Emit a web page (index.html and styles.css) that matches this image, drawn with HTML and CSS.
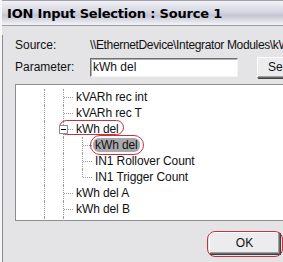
FILE: index.html
```html
<!DOCTYPE html>
<html lang="en">
<head>
  <meta charset="UTF-8" />
  <title>ION Input Selection</title>
  <link rel="stylesheet" href="styles.css">
</head>
<body>

  <div class="window">
    <div class="titlebar">ION Input Selection : Source 1</div>

    <div class="client">
      <div class="field">
        <span class="label">Source:</span>
        <span class="value">\\EthernetDevice\Integrator Modules\kWh del</span>
      </div>

      <div class="field param">
        <span class="label">Parameter:</span>
        <div class="input">kWh del</div>
        <button class="btn select">Select</button>
      </div>

      <div class="tree">
        <div class="row">
          <span class="guide"></span>
          <span class="branch"></span>
          <span class="text">kVARh rec int</span>
        </div>
        <div class="row">
          <span class="guide"></span>
          <span class="branch"></span>
          <span class="text">kVARh rec T</span>
        </div>
        <div class="row">
          <span class="guide"></span>
          <span class="branch open"><span class="toggle"></span></span>
          <span class="text">kWh del</span>
          <span class="ring ring-parent"></span>
        </div>
        <div class="row">
          <span class="guide"></span>
          <span class="guide"></span>
          <span class="branch"></span>
          <span class="text selected">kWh del<span class="ring ring-child"></span></span>
        </div>
        <div class="row">
          <span class="guide"></span>
          <span class="guide"></span>
          <span class="branch"></span>
          <span class="text">IN1 Rollover Count</span>
        </div>
        <div class="row">
          <span class="guide"></span>
          <span class="guide"></span>
          <span class="branch last"></span>
          <span class="text">IN1 Trigger Count</span>
        </div>
        <div class="row">
          <span class="guide"></span>
          <span class="branch"></span>
          <span class="text">kWh del A</span>
        </div>
        <div class="row">
          <span class="guide"></span>
          <span class="branch"></span>
          <span class="text">kWh del B</span>
        </div>
        <div class="row">
          <span class="guide"></span>
          <span class="guide"></span>
        </div>
      </div>

      <div class="footer">
        <button class="btn ok">OK<span class="ring ring-ok"></span></button>
      </div>
    </div>
  </div>

</body>
</html>
```

FILE: styles.css
```css
body {
  margin: 0;
  padding: 0;
  font-family: "Liberation Sans", Arial, sans-serif;
  font-size: 12px;
  color: #111;
  background: #e4e4e6;
}

.window {
  width: 283px;
  height: 262px;
  overflow: hidden;
  background: #e4e4e6;
  border-left: 2px solid #f6f6f6;
}

.titlebar {
  height: 24px;
  line-height: 25px;
  padding-left: 7px;
  font-family: "DejaVu Sans", sans-serif;
  font-weight: bold;
  font-size: 13px;
  letter-spacing: -0.2px;
  color: #000;
  border-top: 1px solid #a2a2ae;
  border-bottom: 1px solid #9c9ca4;
  background: linear-gradient(to bottom, #f2f2f6 0%, #d6d6e2 45%, #c4c4d4 60%, #f4f4f8 100%);
  margin-left: -2px;
  white-space: nowrap;
}

.client {
  height: 236px;
  border-left: 1px solid #8c8c90;
  padding-left: 12px;
  white-space: nowrap;
}

.field {
  display: flex;
  align-items: center;
  height: 20px;
  margin-top: 9px;
}

.field.param {
  margin-top: 2px;
}

.label {
  width: 75px;
  flex: none;
}

.value {
  letter-spacing: -0.35px;
}

.input {
  flex: none;
  width: 144px;
  height: 17px;
  line-height: 17px;
  padding-left: 2px;
  background: #fff;
  border-top: 1px solid #6e6e6e;
  border-left: 1px solid #6e6e6e;
  border-right: 1px solid #f4f4f4;
  border-bottom: 1px solid #f4f4f4;
  box-shadow: inset 1px 1px 0 #b0b0b0;
}

.btn {
  font-family: "Liberation Sans", Arial, sans-serif;
  font-size: 12px;
  color: #111;
  background: #ececee;
  border: 1px solid #6a6a6a;
  border-top-color: #fff;
  border-left-color: #fff;
  box-shadow: 1px 1px 0 #404040, inset -1px -1px 0 #a0a0a0;
  padding: 0;
}

.btn.select {
  flex: none;
  margin-left: 19px;
  width: 70px;
  height: 21px;
  text-align: left;
  padding-left: 10px;
}

.tree {
  position: relative;
  margin-top: 7px;
  width: 290px;
  height: 131px;
  padding-top: 4px;
  background: #fff;
  border: 1px solid #8e8e92;
  border-right: none;
  overflow: hidden;
}

.row {
  position: relative;
  display: flex;
  align-items: center;
  height: 16px;
  padding-left: 19px;
}

.guide,
.branch {
  position: relative;
  width: 19px;
  height: 16px;
  flex: none;
}

.guide::before,
.branch::before {
  content: "";
  position: absolute;
  left: 9px;
  top: 0;
  bottom: 0;
  border-left: 1px dotted #9a9a9a;
}

.branch.last::before {
  bottom: 8px;
}

.branch::after {
  content: "";
  position: absolute;
  left: 10px;
  right: 0;
  top: 8px;
  border-top: 1px dotted #9a9a9a;
}

.toggle {
  position: absolute;
  left: 5px;
  top: 4px;
  width: 7px;
  height: 7px;
  background: #fff;
  border: 1px solid #8e8e8e;
  z-index: 1;
}

.toggle::after {
  content: "";
  position: absolute;
  left: 1px;
  right: 1px;
  top: 3px;
  border-top: 1px solid #000;
}

.text {
  position: relative;
  padding: 0 2px;
  margin-left: 1px;
  line-height: 14px;
  letter-spacing: -0.1px;
}

.text.selected {
  background: #a9a9ad;
  border-radius: 6px;
  color: #111;
}

.ring {
  position: absolute;
  border: 1.5px solid #c8323e;
  border-radius: 10px;
  pointer-events: none;
}

.ring-parent {
  left: 43px;
  top: -1px;
  width: 63px;
  height: 13px;
}

.ring-child {
  left: -3px;
  right: -4px;
  top: -3px;
  bottom: -3px;
}

.footer {
  display: flex;
  justify-content: flex-end;
  padding-right: 5px;
  margin-top: 11px;
}

.btn.ok {
  position: relative;
  width: 71px;
  height: 22px;
  font-size: 12px;
}

.ring-ok {
  left: -3px;
  right: -4px;
  top: -2px;
  bottom: -4px;
  border-radius: 8px;
}
```
